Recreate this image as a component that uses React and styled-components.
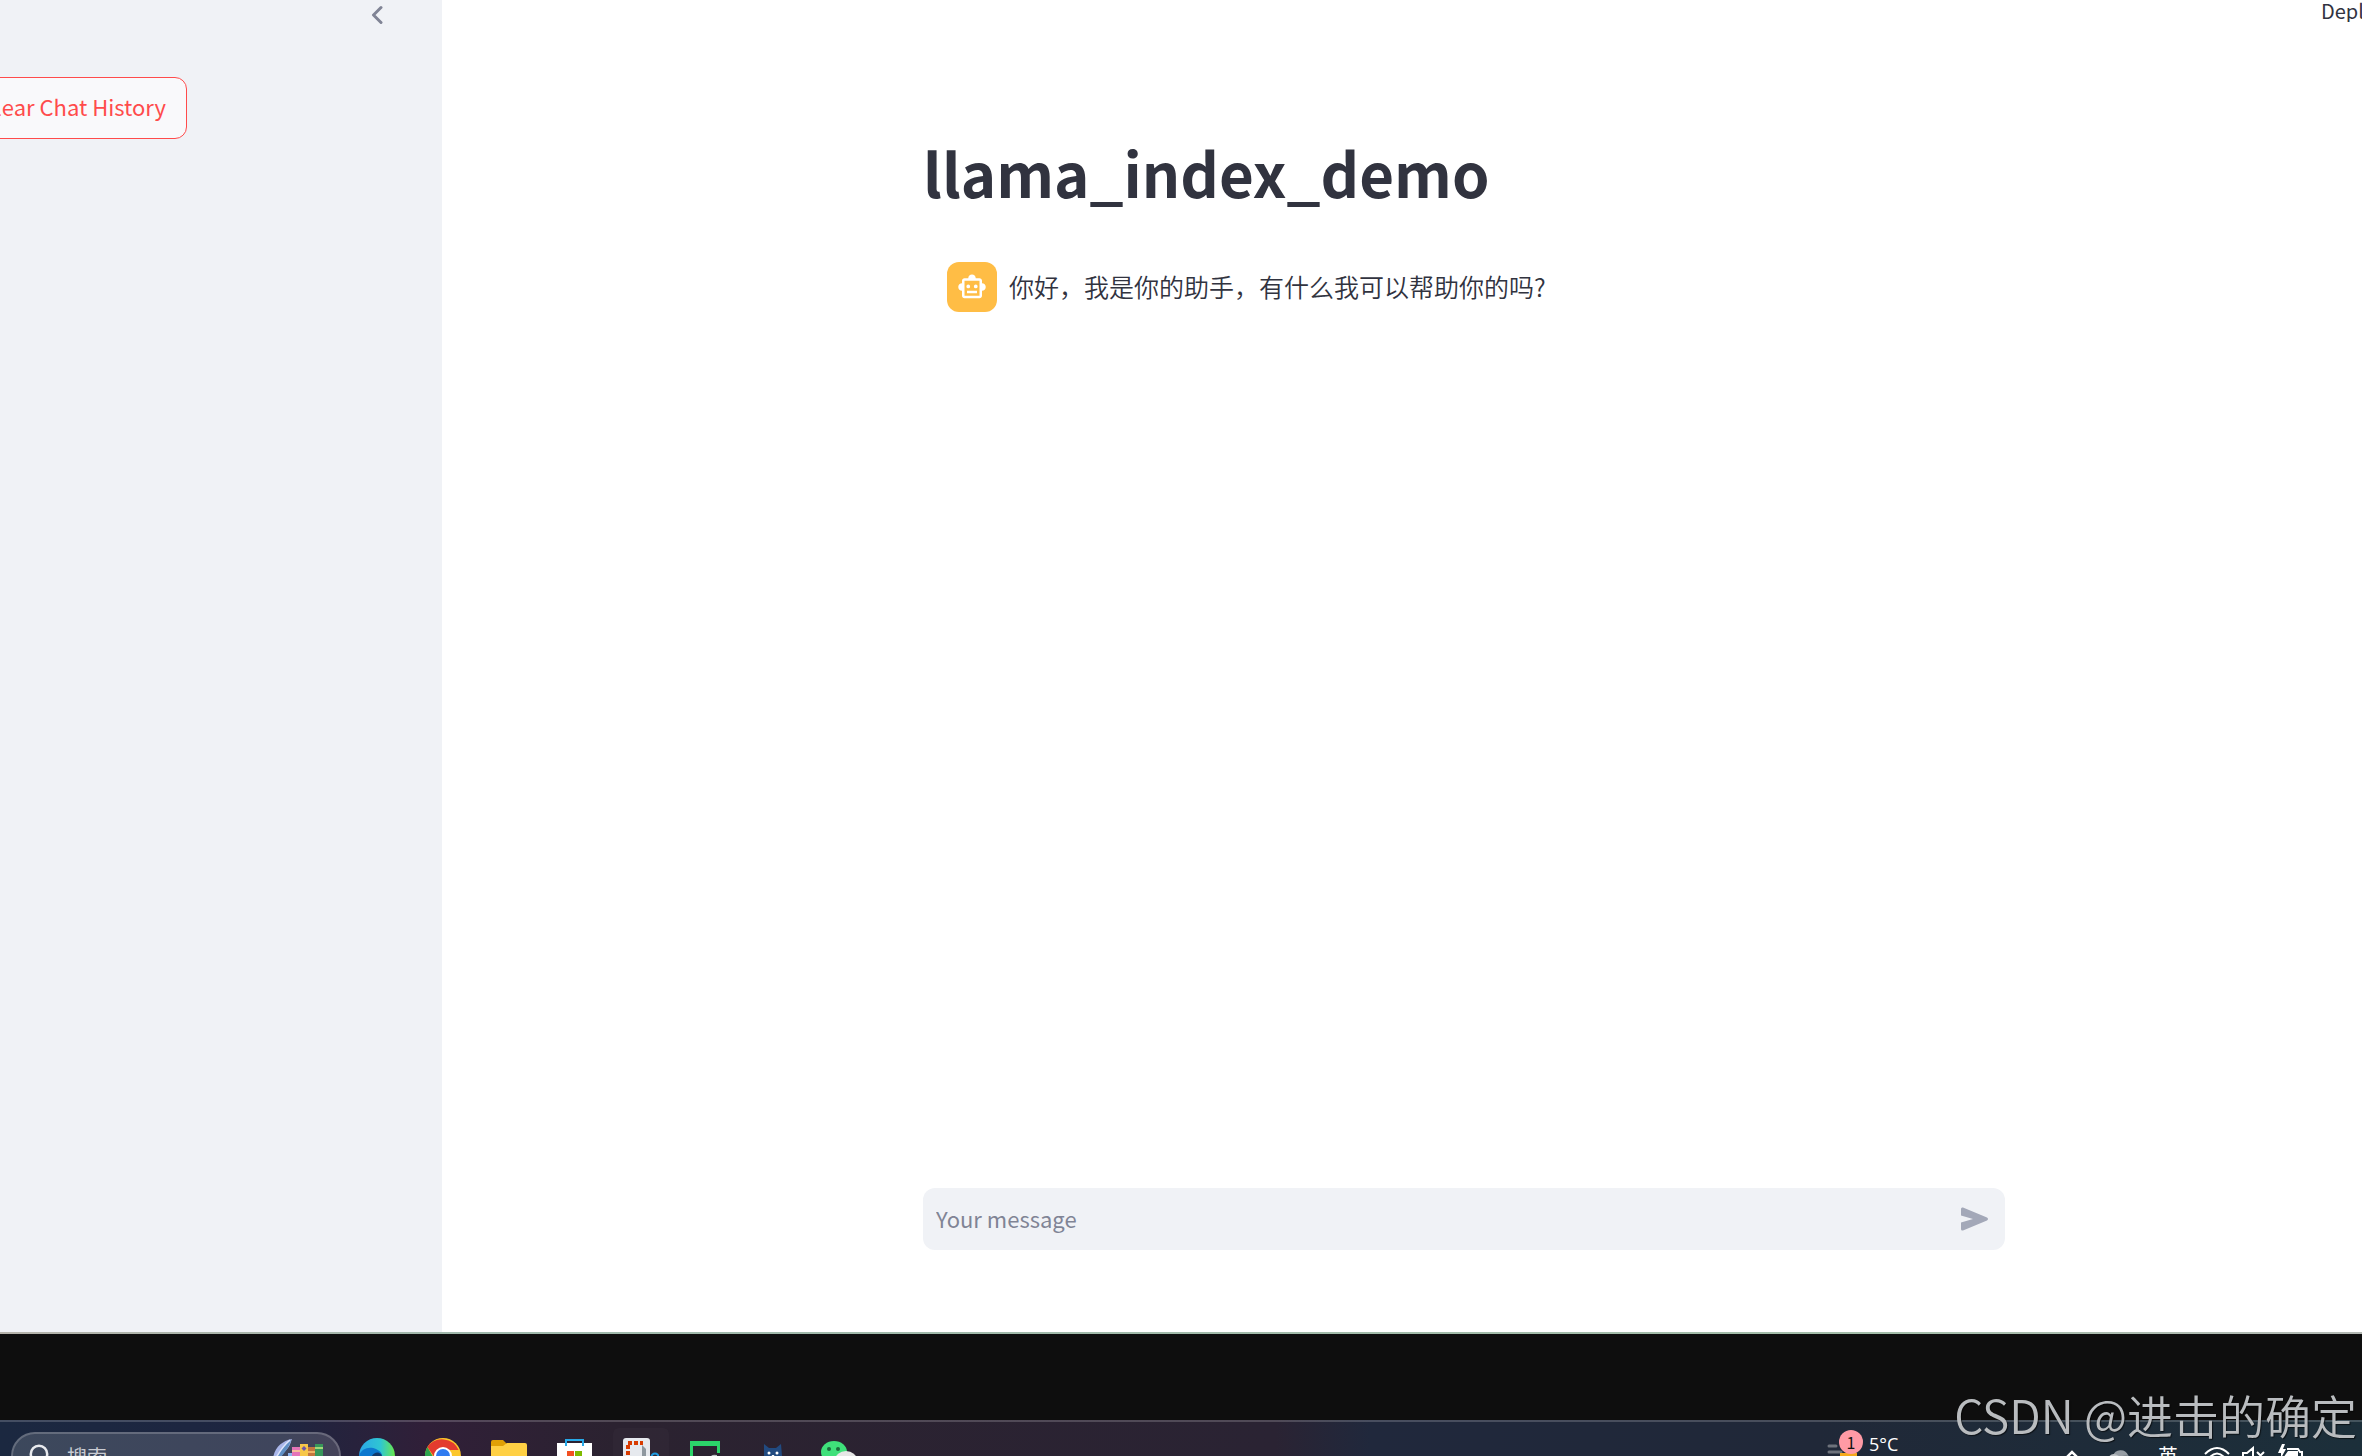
import React from 'react';
import styled, { createGlobalStyle } from 'styled-components';

const GlobalStyle = createGlobalStyle`
  * {
    box-sizing: border-box;
  }

  body {
    margin: 0;
    overflow: hidden;
    font-family: 'Noto Sans CJK SC', sans-serif;
    color: #31333f;
  }

  button, input {
    font-family: inherit;
  }

  svg {
    flex: none;
  }
`;

const RobotIcon = () => (
  <svg width="30" height="30" viewBox="0 0 24 24" fill="#fff" aria-hidden="true">
    <path fillRule="evenodd" d="M20 9V7c0-1.100-.9-2-2-2h-3c0-1.660-1.340-3-3-3S9 3.340 9 5H6c-1.100 0-2 .9-2 2v2c-1.660 0-3 1.340-3 3s1.340 3 3 3v4c0 1.100.9 2 2 2h12c1.100 0 2-.9 2-2v-4c1.660 0 3-1.340 3-3s-1.340-3-3-3zm-2 10H6V7h12v12zM9 10a1.500 1.500 0 1 0 0 3 1.500 1.500 0 0 0 0-3zm6 0a1.500 1.500 0 1 0 0 3 1.500 1.500 0 0 0 0-3zM8 15h8v2H8z" />
  </svg>
);

const SendIcon = () => (
  <svg width="32" height="30" viewBox="0 0 32 30" fill="#a3a8b8" aria-hidden="true">
    <path d="M2 5Q2 3 4 3.600L28 13.500Q30 15 28 16.500L4 26.400Q2 27 2 25V18.500L14 15L2 11.500Z" />
  </svg>
);

const ChevronIcon = () => (
  <svg width="12" height="20" viewBox="0 0 12 20" fill="none" stroke="#808495" strokeWidth="3" aria-hidden="true">
    <path d="M10 2.500L2.500 10L10 17.500" strokeLinecap="round" strokeLinejoin="round" />
  </svg>
);

const MagnifierIcon = () => (
  <svg width="22" height="24" viewBox="0 0 22 24" fill="none" stroke="#e8eaee" strokeWidth="2.500" aria-hidden="true">
    <circle cx="10" cy="10" r="8.200" />
    <path d="M5 17L1 23" strokeLinecap="round" />
  </svg>
);

const BooksIcon = () => (
  <svg width="50" height="36" viewBox="0 0 50 36" aria-hidden="true">
    <path d="M0 20C2 9 9 3 19 1C17 6 17 9 11 14L4 24Z" fill="#a9b6ea" />
    <path d="M3 21C7 13 11 8 18 2C16 10 11 16 5 22Z" fill="#5f8fc4" />
    <path d="M2 22C6 14 10 8 17 2" stroke="#dde4fb" strokeWidth="1.500" fill="none" />
    <rect x="15" y="15" width="5" height="14" fill="#8bb4ef" />
    <rect x="19" y="9" width="8" height="20" fill="#e474b8" />
    <rect x="19" y="12" width="8" height="2" fill="#f6bd9a" />
    <rect x="27" y="6" width="8" height="23" fill="#f7c748" />
    <path d="M31 8l2.500 2.500L31 13l-2.500-2.500z" fill="#6f58a8" />
    <rect x="35" y="9" width="7" height="20" fill="#c4763e" />
    <rect x="35" y="13" width="7" height="2" fill="#efb365" />
    <rect x="42" y="6" width="8" height="23" fill="#38975a" />
    <rect x="42" y="9" width="8" height="2" fill="#a3d977" />
  </svg>
);

const EdgeIcon = () => (
  <svg width="36" height="36" viewBox="0 0 36 36" aria-hidden="true">
    <defs>
      <linearGradient id="edgeTop" x1="0" x2="1">
        <stop offset="0" stopColor="#2ba7e8" />
        <stop offset="0.600" stopColor="#2fc6d2" />
        <stop offset="1" stopColor="#69e84c" />
      </linearGradient>
    </defs>
    <circle cx="18" cy="18" r="18" fill="url(#edgeTop)" />
    <path d="M0 18C2 10 11 8 17 11C22 13 24 17 23 20C18 14 13 17 12 23C12 30 17 34 23 35C10 38 0 29 0 18Z" fill="#0c78cf" />
    <path d="M12 22C12 16 18 12 22 16Q24 19 22 22C21 25 26 27 34 24C28 35 13 33 12 22Z" fill="#123a6b" />
  </svg>
);

const ChromeIcon = () => (
  <svg width="36" height="36" viewBox="0 0 36 36" aria-hidden="true">
    <circle cx="18" cy="18" r="18" fill="#fcc72b" />
    <path d="M2.400 9A18 18 0 0 0 18 36L25.800 22.500H10.200Z" fill="#2da44e" />
    <path d="M2.400 9A18 18 0 0 1 33.600 12H18Q9 12 10 20Z" fill="#e33b2e" />
    <circle cx="18" cy="18" r="9" fill="#fff" />
    <circle cx="18" cy="18" r="7" fill="#2f7bf0" />
  </svg>
);

const FolderIcon = () => (
  <svg width="36" height="36" viewBox="0 0 36 36" aria-hidden="true">
    <path d="M0 4Q0 2 2 2H12L16 6H20V16H0Z" fill="#e0a006" />
    <path d="M0 8H12L16 5H34Q36 5 36 7V32H0Z" fill="#ffd044" />
  </svg>
);

const StoreIcon = () => (
  <svg width="36" height="36" viewBox="0 0 36 36" aria-hidden="true">
    <path d="M0 5H35V30Q35 34 31 34H4Q0 34 0 30Z" fill="#fff" />
    <path d="M9 8V2H26V8" fill="none" stroke="#27a9e8" strokeWidth="2" />
    <rect x="10" y="13" width="7" height="7" fill="#f25022" />
    <rect x="18" y="13" width="7" height="7" fill="#7fba00" />
    <rect x="10" y="21" width="7" height="7" fill="#00a4ef" />
    <rect x="18" y="21" width="7" height="7" fill="#ffb900" />
  </svg>
);

const SnipIcon = () => (
  <svg width="36" height="36" viewBox="0 0 36 36" aria-hidden="true">
    <rect width="27" height="34" rx="3" fill="#e6e9ee" />
    <path d="M19 7L23 11V34H19Z" fill="#8e979f" />
    <path d="M5 34V5H20" fill="none" stroke="#d83b01" strokeWidth="4" strokeDasharray="4 2" strokeDashoffset="1" />
    <circle cx="32" cy="19" r="3.500" fill="none" stroke="#1d9be0" strokeWidth="2" />
  </svg>
);

const MonitorIcon = () => (
  <svg width="36" height="36" viewBox="0 0 36 36" aria-hidden="true">
    <path d="M1 3H31V15H28V8H4V28H1Z" fill="#2bd46a" />
    <path d="M22 18Q24 16 28 17V20H22Z" fill="#b9bec2" />
  </svg>
);

const CatIcon = () => (
  <svg width="36" height="36" viewBox="0 0 36 36" aria-hidden="true">
    <path d="M9 6L14 10H21L26 6L27 18V30H9Z" fill="#214a80" />
    <circle cx="14" cy="15" r="1.500" fill="#fff" />
    <circle cx="22" cy="15" r="1.500" fill="#fff" />
    <path d="M16.500 17H19.500L18 19Z" fill="#fff" />
  </svg>
);

const WeChatIcon = () => (
  <svg width="36" height="36" viewBox="0 0 36 36" aria-hidden="true">
    <ellipse cx="13" cy="14" rx="13" ry="11" fill="#3fe07a" />
    <circle cx="8" cy="11" r="2" fill="#1c6b3b" />
    <circle cx="17" cy="11" r="2" fill="#1c6b3b" />
    <ellipse cx="25" cy="22" rx="11" ry="9" fill="#e6e6e6" />
  </svg>
);

const WeatherIcon = () => (
  <svg width="36" height="36" viewBox="0 0 36 36" aria-hidden="true">
    <path d="M3 8H10M3 14H15" stroke="#6d727b" strokeWidth="3" strokeLinecap="round" />
    <path d="M14 15H31V24H14Z" fill="#f5a81c" />
  </svg>
);

const UpIcon = () => (
  <svg width="16" height="16" viewBox="0 0 16 16" fill="none" stroke="#fff" strokeWidth="2.500" aria-hidden="true">
    <path d="M2 10L8 4L14 10" />
  </svg>
);

const CloudIcon = () => (
  <svg width="26" height="18" viewBox="0 0 26 18" aria-hidden="true">
    <path d="M7 9A8 8 0 0 1 22 8V14H7Z" fill="#969da4" />
    <path d="M2 18V11Q6 4 13 9L18 12V18Z" fill="#bcc0c4" />
    <path d="M14 10Q23 5 25 12V18H14Z" fill="#7f878f" />
  </svg>
);

const WifiIcon = () => (
  <svg width="26" height="20" viewBox="0 0 26 20" fill="none" stroke="#fff" strokeWidth="2" aria-hidden="true">
    <path d="M1 8Q13-4 25 8M5 12Q13 3 21 12M9 16Q13 11 17 16" />
  </svg>
);

const MuteIcon = () => (
  <svg width="24" height="20" viewBox="0 0 24 20" fill="none" stroke="#fff" strokeWidth="2" aria-hidden="true">
    <path d="M1 7H5L11 2V18L5 13H1ZM15 6L22 13M22 6L15 13" />
  </svg>
);

const BatteryIcon = () => (
  <svg width="26" height="24" viewBox="0 0 26 24" aria-hidden="true">
    <path d="M9 5H20L22 8H24V16H22V20H3V13" fill="none" stroke="#fff" strokeWidth="2" />
    <path d="M10 7H20V18H5V14Z" fill="#fff" />
    <path d="M4 0L0 9H3V14L8 5H5L7 0Z" fill="#fff" />
  </svg>
);

const apps = [
  { name: 'Edge', Icon: EdgeIcon },
  { name: 'Chrome', Icon: ChromeIcon },
  { name: 'Files', Icon: FolderIcon },
  { name: 'Store', Icon: StoreIcon },
  { name: 'Snipping Tool', Icon: SnipIcon, active: true },
  { name: 'Terminal', Icon: MonitorIcon },
  { name: 'Clash', Icon: CatIcon },
  { name: 'WeChat', Icon: WeChatIcon }
];

function App() {
  return (
    <Screen>
      <GlobalStyle />
      <Browser>
        <Sidebar>
          <SidebarTop>
            <CollapseButton aria-label="Collapse sidebar"><ChevronIcon /></CollapseButton>
          </SidebarTop>
          <ButtonRow>
            <ClearButton>Clear Chat History</ClearButton>
          </ButtonRow>
        </Sidebar>
        <Main>
          <Header><DeployButton>Deploy</DeployButton></Header>
          <Content>
            <Title>llama_index_demo</Title>
            <Message>
              <Avatar><RobotIcon /></Avatar>
              <p>你好，我是你的助手，有什么我可以帮助你的吗?</p>
            </Message>
            <ChatForm onSubmit={e => e.preventDefault()}>
              <ChatInput type="text" placeholder="Your message" aria-label="Your message" />
              <SendButton aria-label="Send"><SendIcon /></SendButton>
            </ChatForm>
          </Content>
        </Main>
      </Browser>
      <Divider />
      <Backdrop />
      <Taskbar>
        <TaskbarRow>
          <SearchBox>
            <MagnifierIcon />
            <SearchInput type="text" placeholder="搜索" aria-label="搜索" />
            <BooksIcon />
          </SearchBox>
          {apps.map(({ name, Icon, active }) => (
            <AppButton key={name} aria-label={name} $active={active}><Icon /></AppButton>
          ))}
          <Weather>
            <WeatherIcon />
            <Badge>1</Badge>
            <Temperature>5°C</Temperature>
          </Weather>
          <Tray>
            <UpIcon />
            <CloudIcon />
            <Language>英</Language>
            <TrayStatus>
              <WifiIcon />
              <MuteIcon />
              <BatteryIcon />
            </TrayStatus>
          </Tray>
        </TaskbarRow>
      </Taskbar>
      <Watermark>CSDN @进击的确定</Watermark>
    </Screen>
  );
}

const Screen = styled.div`
  display: flex;
  flex-direction: column;
  height: 100vh;
  background: #0e0e0e;
`;

const Browser = styled.div`
  display: flex;
  flex: 1;
  background: #fff;
`;

const Divider = styled.div`
  height: 2px;
  background: linear-gradient(90deg, #b5b3ab, #9fb8ab 20%, #a3bda9 80%, #b3b8b3);
`;

const Backdrop = styled.div`
  height: 86px;
`;

const Sidebar = styled.aside`
  width: 442px;
  background: #f0f2f6;
`;

const SidebarTop = styled.div`
  display: flex;
  justify-content: flex-end;
  height: 77px;
  padding: 5px 59px 0 0;
`;

const CollapseButton = styled.button`
  display: flex;
  align-self: flex-start;
  padding: 0;
  border: none;
  background: none;
`;

const ButtonRow = styled.div`
  display: flex;
  justify-content: flex-end;
  width: 187px;
  overflow: hidden;
`;

const ClearButton = styled.button`
  flex: none;
  height: 62px;
  padding: 0 20px 4px;
  border: 1px solid #ff4b4b;
  border-radius: 12px;
  background: #f9f9fb;
  color: #ff4b4b;
  font-size: 22px;
`;

const Main = styled.main`
  display: flex;
  flex: 1;
  flex-direction: column;
  min-width: 0;
`;

const Header = styled.header`
  display: flex;
  justify-content: flex-end;
  height: 126px;
`;

const DeployButton = styled.button`
  align-self: flex-start;
  width: 41px;
  padding: 0;
  border: none;
  background: none;
  color: #31333f;
  font-size: 20px;
  line-height: 22px;
  overflow: hidden;
`;

const Content = styled.div`
  display: flex;
  flex: 1;
  flex-direction: column;
  width: 1082px;
  margin-left: 481px;
  padding-bottom: 82px;
`;

const Title = styled.h1`
  margin: 0;
  font-size: 60px;
  line-height: 92px;
`;

const Message = styled.div`
  display: flex;
  align-items: center;
  gap: 12px;
  padding: 44px 24px;
  font-size: 25px;
  font-weight: 350;

  p {
    margin: 0;
    padding-bottom: 2px;
  }
`;

const Avatar = styled.div`
  display: flex;
  align-items: center;
  justify-content: center;
  width: 50px;
  height: 50px;
  border-radius: 12px;
  background: #ffbd45;
`;

const ChatForm = styled.form`
  display: flex;
  align-items: center;
  height: 62px;
  margin-top: auto;
  border-radius: 12px;
  background: #f0f2f6;
`;

const ChatInput = styled.input`
  flex: 1;
  padding: 0 13px 2px;
  border: none;
  background: none;
  font-size: 22px;

  &::placeholder {
    color: #808495;
  }
`;

const SendButton = styled.button`
  display: flex;
  padding: 0 14px;
  border: none;
  background: none;
`;

const Taskbar = styled.footer`
  height: 36px;
  border-top: 2px solid rgba(255, 255, 255, 0.18);
  background: linear-gradient(90deg, #1b2840, #1e2540 12%, #301f38 18%, #2b2230 26%, #2a2333 54%, #20283c 58%, #202838 77%, #1c2f3a);
  overflow: hidden;
`;

const TaskbarRow = styled.div`
  display: flex;
  align-items: center;
  height: 68px;
  padding: 0 58px 0 11px;
`;

const SearchBox = styled.div`
  display: flex;
  align-items: center;
  width: 330px;
  height: 48px;
  margin-right: 3px;
  padding: 0 16px;
  border: 2px solid rgba(255, 255, 255, 0.2);
  border-radius: 24px;
  background: rgba(255, 255, 255, 0.15);
`;

const SearchInput = styled.input`
  flex: 1;
  min-width: 0;
  padding: 0 16px;
  border: none;
  background: none;
  font-size: 20px;

  &::placeholder {
    color: #c8cbd2;
  }
`;

const AppButton = styled.button`
  display: flex;
  align-items: center;
  justify-content: center;
  width: 56px;
  height: 56px;
  margin: 0 5px;
  padding: 0;
  border: none;
  border-radius: 6px;
  background: ${props => props.$active ? 'rgba(255, 255, 255, 0.02)' : 'none'};
`;

const Weather = styled.div`
  position: relative;
  display: flex;
  align-items: flex-start;
  width: 238px;
  height: 36px;
  margin-left: auto;
  color: #fff;
`;

const Badge = styled.span`
  position: absolute;
  top: -8px;
  left: 13px;
  width: 24px;
  height: 24px;
  border-radius: 50%;
  background: #ff9aa5;
  color: #111;
  font-size: 16px;
  line-height: 24px;
  text-align: center;
`;

const Temperature = styled.span`
  padding-left: 7px;
  font-family: 'Open Sans', sans-serif;
  font-size: 18px;
  line-height: 12px;
`;

const Tray = styled.div`
  display: flex;
  align-items: center;
  gap: 26px;
  color: #fff;
`;

const Language = styled.span`
  font-size: 20px;
  line-height: 20px;
`;

const TrayStatus = styled.div`
  display: flex;
  align-items: center;
  gap: 12px;
`;

const Watermark = styled.div`
  position: fixed;
  right: 5px;
  bottom: 8px;
  color: #b9bcbf;
  font-size: 46px;
  font-weight: 350;
  line-height: 68px;
  text-shadow: 1px 1px 1px rgba(0, 0, 0, 0.6);
  white-space: nowrap;
`;

export default App;
